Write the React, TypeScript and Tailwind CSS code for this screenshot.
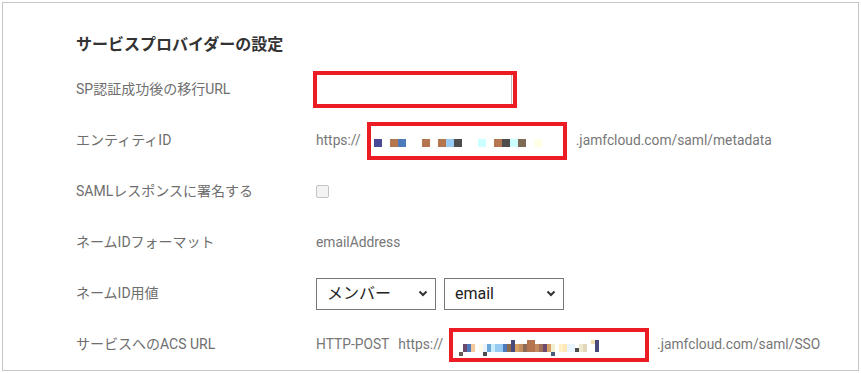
import React from "react";

/* 設定画面の一部（赤枠は注釈） */

const font = { fontFamily: '"Roboto", "Noto Sans CJK JP", sans-serif' };

type Row = {
  label: string;
  value: React.ReactNode;
};

const RED = "border-[#ec1c24]";

// mosaic of row 2 : 8px cells
const entityCells: (string | null)[] = [
  "#4b4a96", null, "#b5754f", "#4f79bd", null, null, "#b5754f", null,
  "#b5754f", "#99ccf5", "#4d4d4d", null, null, "#ccffff", null,
  "#b5754f", "#4d4d4d", "#ccffff", "#7f6a55", null, "#ffffe5",
];

// mosaic of bottom row : 4px cells, 35 columns
const acsRows: Record<number, string>[] = [
  { 13: "#4a4a7a", 17: "#b5754f", 18: "#b5754f", 33: "#f5e0b0", 34: "#4a4a7a" },
  {
    1: "#6b4a6e", 2: "#4f79bd", 3: "#f5c99a", 5: "#fffbe8", 6: "#e8f4ff",
    7: "#6aa6d8", 8: "#c8eeff", 9: "#99ccf5", 10: "#99ccf5", 11: "#4d7ab8",
    12: "#8c6a4a", 13: "#4a4a7a", 14: "#d9a066", 15: "#c49060", 16: "#8c6a55",
    17: "#b5754f", 18: "#b5754f", 19: "#c48a60", 20: "#a0705a", 21: "#6b4a6e",
    22: "#d9a066", 23: "#f0f0d0", 25: "#fff0c8", 26: "#ffe8b8", 27: "#eaf6ff",
    28: "#eaf6ff", 30: "#eee8d0", 31: "#e0d8b8", 34: "#4a4a7a",
  },
  {
    1: "#6b4a6e", 2: "#4f79bd", 3: "#f5c99a", 5: "#fffbe8", 6: "#e8f4ff",
    7: "#6aa6d8", 8: "#c8eeff", 9: "#99ccf5", 10: "#99ccf5", 11: "#4d7ab8",
    12: "#8c6a4a", 13: "#4a4a7a", 14: "#d9a066", 15: "#c49060", 16: "#8c6a55",
    17: "#b5754f", 18: "#b5754f", 19: "#c48a60", 20: "#a0705a", 21: "#6b4a6e",
    22: "#d9a066", 23: "#f0f0d0", 25: "#fff0c8", 26: "#ffe8b8", 27: "#eaf6ff",
    28: "#eaf6ff", 29: "#4d4d4d", 30: "#eee8d0", 31: "#e0d8b8", 34: "#4a4a7a",
  },
  { 0: "#6b5a55", 6: "#4d4d4d", 23: "#4a5a7a" },
];

const Chevron = () => (
  <svg width="10" height="7" viewBox="0 0 10 7" className="shrink-0">
    <path d="M1.5 1.5 L5 5 L8.5 1.5" fill="none" stroke="#333" strokeWidth="2" />
  </svg>
);

const FakeSelect = ({ text, width }: { text: string; width: string }) => (
  <div
    className={`flex h-[32px] ${width} items-center justify-between border border-[#767676] bg-white pl-[10px] pr-[7px] text-[16px] text-[#222]`}
  >
    <span>{text}</span>
    <Chevron />
  </div>
);

const EntityMask = () => (
  <div className={`h-[38px] w-[200px] border-4 ${RED} pl-[3px] pt-[13px]`}>
    <div className="flex">
      {entityCells.map((c, i) => (
        <span
          key={i}
          className="block h-[8px] w-[8px]"
          style={{ backgroundColor: c ?? "transparent" }}
        />
      ))}
    </div>
  </div>
);

const AcsMask = () => (
  <div className={`h-[34px] w-[200px] border-4 ${RED} pl-[6px] pt-[8px]`}>
    {acsRows.map((row, r) => (
      <div key={r} className="flex">
        {Array.from({ length: 35 }).map((_, i) => (
          <span
            key={i}
            className="block h-[4px] w-[4px]"
            style={{ backgroundColor: row[i] ?? "transparent" }}
          />
        ))}
      </div>
    ))}
  </div>
);

const rows: Row[] = [
  {
    label: "SP認証成功後の移行URL",
    value: (
      <div className={`-ml-[3px] h-[37px] w-[204px] border-4 ${RED}`}>
        <div className="h-full w-[195px] border-r border-[#bdbdbd]" />
      </div>
    ),
  },
  {
    label: "エンティティID",
    value: (
      <div className="flex items-center">
        <span>https://</span>
        <div className="ml-[6px]">
          <EntityMask />
        </div>
        <span className="ml-[9px]">.jamfcloud.com/saml/metadata</span>
      </div>
    ),
  },
  {
    label: "SAMLレスポンスに署名する",
    value: (
      <div className="h-[13px] w-[13px] rounded-[2px] border border-[#c4c4c4] bg-[#f3f3f3]" />
    ),
  },
  {
    label: "ネームIDフォーマット",
    value: <span>emailAddress</span>,
  },
  {
    label: "ネームID用値",
    value: (
      <div className="flex gap-[8px]">
        <FakeSelect text="メンバー" width="w-[120px]" />
        <FakeSelect text="email" width="w-[120px]" />
      </div>
    ),
  },
  {
    label: "サービスへのACS URL",
    value: (
      <div className="flex items-center">
        <span>HTTP-POST</span>
        <span className="ml-[9px]">https://</span>
        <div className="ml-[6px]">
          <AcsMask />
        </div>
        <span className="ml-[8px]">.jamfcloud.com/saml/SSO</span>
      </div>
    ),
  },
];

export default function App() {
  return (
    <div className="h-[373px] w-[861px] bg-white p-[2px]" style={font}>
      <div className="h-[369px] w-[857px] border border-[#c6c6c6] pl-[73px]">
        <h2 className="mt-[30px] mb-[7px] h-[24px] text-[16px] font-bold leading-[24px] text-[#333]">
          サービスプロバイダーの設定
        </h2>
        {rows.map((row) => (
          <div key={row.label} className="flex h-[51px] items-center text-[14px] text-[#6e6e6e]">
            <div className="w-[240px] shrink-0">{row.label}</div>
            <div className="text-[13.8px] text-[#777]">{row.value}</div>
          </div>
        ))}
      </div>
    </div>
  );
}
